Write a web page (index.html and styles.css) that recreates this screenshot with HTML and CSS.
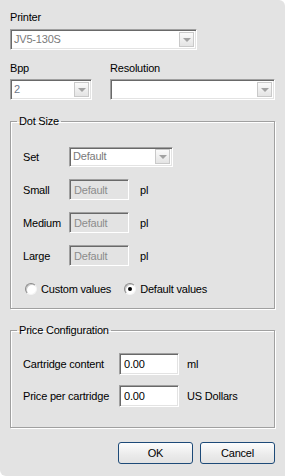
FILE: index.html
```html
<!DOCTYPE html>
<html lang="en">
<head>
  <meta charset="UTF-8">
  <title>Printer settings</title>
  <link rel="stylesheet" href="styles.css">
</head>
<body>

<div class="dialog">

  <!-- Printer -->
  <div class="field">
    <div class="caption">Printer</div>
    <div class="combo combo-printer"><span class="combo-text">JV5-130S</span><span class="drop"></span></div>
  </div>

  <!-- Bpp / Resolution -->
  <div class="pair">
    <div class="field">
      <div class="caption">Bpp</div>
      <div class="combo combo-bpp"><span class="combo-text">2</span><span class="drop"></span></div>
    </div>
    <div class="field">
      <div class="caption">Resolution</div>
      <div class="combo combo-res"><span class="combo-text"></span><span class="drop"></span></div>
    </div>
  </div>

  <!-- Dot size -->
  <fieldset class="group dot">
    <legend>Dot Size</legend>
    <div class="row">
      <span class="lbl">Set</span>
      <div class="combo combo-set"><span class="combo-text">Default</span><span class="drop"></span></div>
    </div>
    <div class="row">
      <span class="lbl">Small</span>
      <input class="edit" type="text" value="Default" disabled>
      <span class="unit">pl</span>
    </div>
    <div class="row">
      <span class="lbl">Medium</span>
      <input class="edit" type="text" value="Default" disabled>
      <span class="unit">pl</span>
    </div>
    <div class="row">
      <span class="lbl">Large</span>
      <input class="edit" type="text" value="Default" disabled>
      <span class="unit">pl</span>
    </div>
    <div class="row radios">
      <span class="radio"><span class="dot-mark"></span>Custom values</span>
      <span class="radio checked"><span class="dot-mark"></span>Default values</span>
    </div>
  </fieldset>

  <!-- Price -->
  <fieldset class="group price">
    <legend>Price Configuration</legend>
    <div class="row">
      <span class="lbl">Cartridge content</span>
      <input class="edit active" type="text" value="0.00">
      <span class="unit">ml</span>
    </div>
    <div class="row">
      <span class="lbl">Price per cartridge</span>
      <input class="edit active" type="text" value="0.00">
      <span class="unit">US Dollars</span>
    </div>
  </fieldset>

  <div class="buttons">
    <button class="btn ok">OK</button>
    <button class="btn cancel">Cancel</button>
  </div>

</div>

</body>
</html>
```

FILE: styles.css
```css
/* General */
html {
  background: #ffffff;
}

body {
  margin: 0;
  font-family: "Liberation Sans", Arial, sans-serif;
  font-size: 11px;
  letter-spacing: -0.2px;
  color: #000000;
}

.dialog {
  width: 285px;
  height: 476px;
  box-sizing: border-box;
  padding: 10px 10px 0 10px;
  background: #e3e3e3;
  border-radius: 0 6px 0 6px;
}

.caption {
  line-height: 14px;
  height: 14px;
}

.field .caption {
  margin-bottom: 5px;
}

.pair {
  display: flex;
  margin-top: 11px;
}

.pair .caption {
  margin-bottom: 4px;
}

.pair .field + .field {
  margin-left: 18px;
}

/* Combo boxes */
.combo {
  display: flex;
  align-items: center;
  box-sizing: border-box;
  height: 21px;
  background: #ffffff;
  border: 1px solid;
  border-color: #a0a0a0 #ffffff #ffffff #a0a0a0;
  box-shadow: inset 1px 1px 0 #696969, inset -1px -1px 0 #e3e3e3;
  padding: 1px 2px 1px 1px;
}

.combo-text {
  flex: 1;
  padding-left: 2px;
  color: #7a7a7a;
  line-height: 15px;
}

.combo-bpp .combo-text {
  color: #6f7a8c;
}

.drop {
  position: relative;
  width: 15px;
  height: 15px;
  box-sizing: border-box;
  border: 1px solid #c9c9c9;
  background: linear-gradient(#fafafa, #e4e4e4);
}

.drop::after {
  content: "";
  position: absolute;
  left: 3px;
  top: 5px;
  border-left: 4px solid transparent;
  border-right: 4px solid transparent;
  border-top: 4px solid #a2a2a2;
}

.combo-printer {
  width: 187px;
}

.combo-bpp {
  width: 82px;
}

.combo-res {
  width: 165px;
}

.combo-set {
  width: 104px;
  height: 20px;
}

/* Group boxes */
.group {
  margin: 14px 0 0 0;
  padding: 0 10px 0 12px;
  border: 1px solid #a0a0a0;
  box-shadow: inset 1px 1px 0 #ffffff, 1px 1px 0 #ffffff;
  min-width: 0;
}

.group legend {
  margin-left: -6px;
  padding: 0 2px;
  line-height: 14px;
}

.dot {
  padding-top: 18px;
  padding-bottom: 9px;
  display: flex;
  flex-direction: column;
  gap: 12px;
}

.price {
  padding-top: 16px;
  padding-bottom: 20px;
  display: flex;
  flex-direction: column;
  gap: 10px;
}

.row {
  display: flex;
  align-items: center;
  height: 21px;
}

.price .row {
  height: 22px;
}

.lbl {
  width: 46px;
}

.price .lbl {
  width: 96px;
}

/* Edit boxes */
.edit {
  box-sizing: border-box;
  width: 60px;
  height: 21px;
  margin: 0;
  padding: 0 0 0 4px;
  font-family: inherit;
  font-size: 11px;
  letter-spacing: inherit;
  color: #8c8c8c;
  background: #e3e3e3;
  border: 1px solid;
  border-color: #a0a0a0 #ffffff #ffffff #a0a0a0;
  box-shadow: inset 1px 1px 0 #696969, inset -1px -1px 0 #e3e3e3;
  outline: none;
}

.edit.active {
  color: #000000;
  background: #ffffff;
  height: 22px;
}

.unit {
  margin-left: 11px;
}

.price .unit {
  margin-left: 8px;
}

/* Radios */
.radios {
  padding-left: 2px;
}

.radio {
  display: flex;
  align-items: center;
  margin-right: 13px;
}

.dot-mark {
  position: relative;
  width: 12px;
  height: 12px;
  box-sizing: border-box;
  margin-right: 4px;
  border-radius: 50%;
  background: #ffffff;
  border: 1px solid;
  border-color: #8a8a8a #f4f4f4 #f4f4f4 #8a8a8a;
  box-shadow: inset 1px 1px 0 #c8c8c8;
}

.radio.checked .dot-mark::after {
  content: "";
  position: absolute;
  left: 3px;
  top: 3px;
  width: 4px;
  height: 4px;
  border-radius: 50%;
  background: #000000;
}

/* Buttons */
.buttons {
  display: flex;
  justify-content: flex-end;
  gap: 7px;
  margin-top: 14px;
}

.btn {
  height: 22px;
  margin: 0;
  padding: 0;
  font-family: inherit;
  font-size: 11px;
  letter-spacing: inherit;
  color: #000000;
  border: 1px solid #1d4a78;
  border-radius: 3px;
  background: linear-gradient(#fdfdfd, #ececec 55%, #e2e2e2);
}

.ok {
  width: 75px;
}

.cancel {
  width: 75px;
}
```
